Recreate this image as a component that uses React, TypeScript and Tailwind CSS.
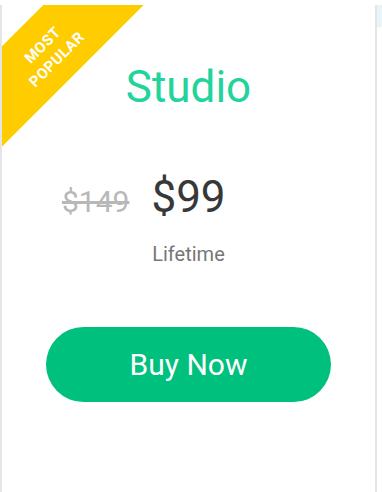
export default function App() {
  return (
    <div
      className="relative min-h-screen w-[382px] bg-white pt-[5px]"
      style={{ fontFamily: "Roboto, 'Liberation Sans', sans-serif" }}
    >
      {/* neighbouring card edge peeking in on the right */}
      <div className="absolute right-0 top-[5px] h-[22px] w-[7px] bg-[#e8f4f9]" />

      <div className="relative h-[487px] w-[377px] overflow-hidden border-x-2 border-[#e5e5e5] bg-white">
        <div className="absolute left-[-54px] top-[10px] flex h-[71px] w-[200px] -rotate-45 flex-col items-center justify-center bg-[#ffcc00] pt-[4px] text-[15px] font-bold leading-[20px] tracking-[0.5px] text-white">
          <span>MOST</span>
          <span>POPULAR</span>
        </div>

        <div className="flex flex-col items-center pt-[56px]">
          <h1 className="text-[44px] font-normal leading-[52px] text-[#22d39c]">
            Studio
          </h1>

          <div className="mt-[58px] grid w-full grid-cols-[1fr_auto_1fr] items-baseline">
            <span className="mr-[22px] justify-self-end text-[30px] leading-[36px] text-[#b8b8b8] line-through">
              $149
            </span>
            <span className="text-[44px] font-normal leading-[52px] text-[#383838]">
              $99
            </span>
            <span />
          </div>

          <p className="mt-[18px] text-[20px] leading-[26px] text-[#777777]">
            Lifetime
          </p>

          <button className="mt-[60px] flex h-[75px] w-[285px] items-center justify-center rounded-full bg-[#00c07e] text-[30px] text-white">
            Buy Now
          </button>
        </div>
      </div>
    </div>
  );
}
